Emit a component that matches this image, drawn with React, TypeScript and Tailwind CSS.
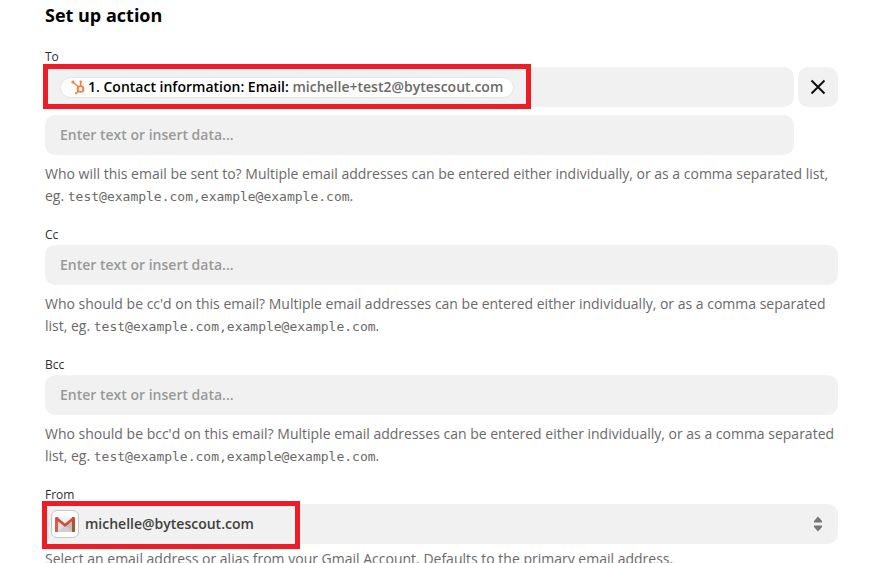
import type { ReactNode } from 'react'

const inputClass =
  'block h-10 w-full rounded-[10px] bg-[#f1f1f1] px-[15px] pb-0.5 text-sm font-semibold text-[#403f3e] outline-none placeholder:text-[#999999]'

function HubspotIcon() {
  return (
    <svg className="h-4 w-4 shrink-0" viewBox="0 0 16 16" fill="none" stroke="#f0813f" aria-hidden="true">
      <circle cx="10.5" cy="10" r="2.9" strokeWidth="1.9" />
      <path d="M10.7 7V3M8.3 7.8 3 3.2M8.3 12.2 6.3 14" strokeWidth="1.4" />
      <circle cx="10.7" cy="2.8" r="1.3" fill="#f0813f" stroke="none" />
      <circle cx="2.8" cy="3" r="1.5" fill="#f0813f" stroke="none" />
      <circle cx="6" cy="14.2" r="1.1" fill="#f0813f" stroke="none" />
    </svg>
  )
}

function GmailIcon() {
  return (
    <svg className="h-5 w-5 shrink-0" viewBox="0 0 20 20" aria-hidden="true">
      <rect x="0" y="3" width="20" height="15" rx="1" fill="#dedede" />
      <path d="M3 18 10 11l7 7z" fill="#cfcfcf" />
      <path d="m10 11 7-6v13z" fill="#c0c0c0" />
      <path d="M2 3h16l-8 7z" fill="#f1f1f1" />
      <path d="M0 4.5C0 3.5.7 3 1.5 3H3v15H1c-.6 0-1-.4-1-1z" fill="#d0604f" />
      <path d="M17 3h1.5c.8 0 1.5.5 1.5 1.5V17c0 .6-.4 1-1 1h-2z" fill="#a8562c" />
      <path d="M1.2 4 10 11.2 18.8 4" fill="none" stroke="#d54b3d" strokeWidth="2.6" />
    </svg>
  )
}

function Help({ children }: { children: ReactNode }) {
  return <p className="text-sm leading-[22px] text-[#6b6968]">{children}</p>
}

function Addresses() {
  return (
    <code className="font-['DejaVu_Sans_Mono',monospace] text-[13px] leading-none">
      test@example.com,example@example.com
    </code>
  )
}

function Field({ id, label, help }: { id: string; label: string; help: ReactNode }) {
  return (
    <div>
      <label htmlFor={id} className="mb-0.5 block text-xs leading-4 text-[#2d2e2e]">
        {label}
      </label>
      <input id={id} type="text" placeholder="Enter text or insert data..." className={inputClass} />
      <div className="mt-2">
        <Help>{help}</Help>
      </div>
    </div>
  )
}

export default function App() {
  return (
    <main className="h-screen overflow-hidden bg-white px-[45px] pt-[3px] font-['Open_Sans',sans-serif]">
      <h1 className="mb-[22px] text-lg leading-6 font-bold text-black">Set up action</h1>

      <form className="flex flex-col gap-5" onSubmit={(e) => e.preventDefault()}>
        <div>
          <label htmlFor="to" className="mb-0.5 block text-xs leading-4 text-[#2d2e2e]">
            To
          </label>
          <div className="relative flex gap-1">
            <div className="flex h-10 grow items-center rounded-[10px] bg-[#f1f1f1] px-[15px]">
              <span className="flex h-[21px] items-center rounded-full border border-[#e4e4e4] bg-white pr-2.5 pl-[9px] text-sm leading-5 font-semibold whitespace-nowrap text-black">
                <HubspotIcon />
                <span className="ml-0.5">
                  1. Contact information: Email:{' '}
                  <span className="text-[#6b6968]">michelle+test2@bytescout.com</span>
                </span>
              </span>
            </div>
            <button
              type="button"
              aria-label="Remove"
              className="flex size-10 shrink-0 items-center justify-center rounded-[10px] bg-[#f1f1f1]"
            >
              <svg className="size-4" viewBox="0 0 16 16" stroke="#111" strokeWidth="2" aria-hidden="true">
                <path d="m1.5 1.5 13 13M14.5 1.5l-13 13" />
              </svg>
            </button>
            <div className="pointer-events-none absolute -top-[3px] -left-0.5 h-[45px] w-[488px] border-5 border-[#ee1c24]" />
          </div>
          <div className="mt-2 mb-2 pr-11">
            <input id="to" type="text" placeholder="Enter text or insert data..." className={inputClass} />
          </div>
          <Help>
            Who will this email be sent to? Multiple email addresses can be entered either individually, or as a
            comma separated list, eg. <Addresses />.
          </Help>
        </div>

        <Field
          id="cc"
          label="Cc"
          help={
            <>
              Who should be cc'd on this email? Multiple email addresses can be entered either individually, or as
              a comma separated list, eg. <Addresses />.
            </>
          }
        />
        <Field
          id="bcc"
          label="Bcc"
          help={
            <>
              Who should be bcc'd on this email? Multiple email addresses can be entered either individually, or as
              a comma separated list, eg. <Addresses />.
            </>
          }
        />

        <div>
          <label htmlFor="from" className="block text-xs leading-4 text-[#2d2e2e]">
            From
          </label>
          <div className="relative mt-px mb-1">
            <select
              id="from"
              className="block h-10 w-full appearance-none rounded-[10px] bg-[#f1f1f1] pr-10 pl-10 text-sm font-semibold text-[#403f3e] outline-none"
            >
              <option>michelle@bytescout.com</option>
            </select>
            <span className="pointer-events-none absolute top-1.5 left-1.5 flex size-7 items-center justify-center rounded-md border border-[#c8c8c8] bg-white">
              <GmailIcon />
            </span>
            <svg
              className="pointer-events-none absolute top-3 right-4 h-4 w-2"
              viewBox="0 0 8 16"
              fill="#767676"
              aria-hidden="true"
            >
              <path d="M4 .5 8 5v1.5H0V5zM4 15.5 8 11V9.500H0V11z" />
            </svg>
            <div className="pointer-events-none absolute -top-[3px] -left-[3px] h-12 w-[258px] border-5 border-[#ee1c24]" />
          </div>
          <Help>
            Select an email address or alias from your Gmail Account. Defaults to the primary email address.
          </Help>
        </div>
      </form>
    </main>
  )
}
